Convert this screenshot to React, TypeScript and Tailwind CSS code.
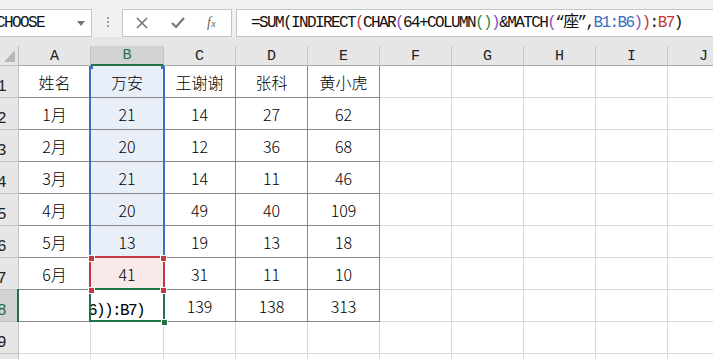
const COLS = [
  { l: "A", w: "w-[72px]" },
  { l: "B", w: "w-[73px]" },
  { l: "C", w: "w-[72px]" },
  { l: "D", w: "w-[72px]" },
  { l: "E", w: "w-[72px]" },
  { l: "F", w: "w-[72px]" },
  { l: "G", w: "w-[72px]" },
  { l: "H", w: "w-[72px]" },
  { l: "I", w: "w-[72px]" },
  { l: "J", w: "w-[72px]" },
];

const DATA = [
  ["姓名", "万安", "王谢谢", "张科", "黄小虎"],
  ["1月", "21", "14", "27", "62"],
  ["2月", "20", "12", "36", "68"],
  ["3月", "21", "14", "11", "46"],
  ["4月", "20", "49", "40", "109"],
  ["5月", "13", "19", "13", "18"],
  ["6月", "41", "31", "11", "10"],
  ["", "", "139", "138", "313"],
];

const mono = "font-['Liberation_Mono','Noto_Sans_CJK_SC',monospace] text-[16px] tracking-[-1.6px]";

function Toolbar() {
  return (
    <div className="h-[37px] bg-[#f1f1f1] flex items-start">
      {/* name box */}
      <div className="mt-[9px] h-[28px] w-[92px] bg-white border border-l-0 border-[#c6c6c6] flex items-center justify-between pr-[6px]">
        <span className={`${mono} ml-[-4px] text-[#111]`}>CHOOSE</span>
        <svg width="8" height="5" viewBox="0 0 8 5">
          <path d="M0 0 L8 0 L4 5 Z" fill="#777" />
        </svg>
      </div>
      <div className="mt-[17px] ml-[15px] flex flex-col gap-[2px]">
        <div className="w-[2px] h-[2px] bg-[#a0a0a0]" />
        <div className="w-[2px] h-[2px] bg-[#a0a0a0]" />
        <div className="w-[2px] h-[2px] bg-[#a0a0a0]" />
      </div>
      {/* cancel / enter / fx */}
      <div className="mt-[9px] ml-[13px] h-[28px] w-[110px] bg-white border border-[#c6c6c6] flex items-center">
        <svg width="12" height="12" viewBox="0 0 12 12" className="ml-[13px]">
          <path d="M1 1 L11 11 M11 1 L1 11" stroke="#777" strokeWidth="1.6" />
        </svg>
        <svg width="14" height="12" viewBox="0 0 14 12" className="ml-[23px]">
          <path d="M1 6 L5 10 L13 1" stroke="#777" strokeWidth="2.2" fill="none" />
        </svg>
        <span className="ml-[22px] font-['Liberation_Serif',serif] italic text-[14px] text-[#666] leading-none">
          f<span className="text-[11px]">x</span>
        </span>
      </div>
      {/* formula */}
      <div className="mt-[9px] ml-[4px] h-[28px] flex-1 bg-white border border-r-0 border-[#c6c6c6] flex items-center pl-[14px] text-[#111]">
        <span className={`${mono} whitespace-nowrap`}>
          =SUM(INDIRECT<span className="text-[#c33b3b]">(</span>CHAR
          <span className="text-[#8b4fc0]">(</span>64+COLUMN
          <span className="text-[#2e8a3c]">()</span>
          <span className="text-[#8b4fc0]">)</span>&amp;MATCH
          <span className="text-[#8b4fc0]">(</span>“座”,
          <span className="text-[#3b6fc8]">B1:B6</span>
          <span className="text-[#8b4fc0]">)</span>
          <span className="text-[#c33b3b]">)</span>:
          <span className="text-[#c33b3b]">B7</span>)
        </span>
      </div>
    </div>
  );
}

function HeaderRow() {
  return (
    <div className="flex h-[20px]">
      <div className="w-[19px] shrink-0 h-[20px] bg-[#e6e6e6] border-r border-b border-[#bdbdbd] relative">
        <svg width="11" height="12" viewBox="0 0 11 12" className="absolute left-[4px] top-[4px]">
          <path d="M11 0 L11 12 L0 12 Z" fill="#b8b8b8" />
        </svg>
      </div>
      {COLS.map((c) => {
        const sel = c.l === "B";
        return (
          <div
            key={c.l}
            className={`${c.w} shrink-0 h-[20px] flex items-end justify-center pb-[1px] border-r border-[#c4c4c4] font-['Liberation_Mono',monospace] text-[15px] leading-none ${
              sel
                ? "bg-[#d2d2d2] border-b-2 border-b-[#217346] text-[#217346]"
                : "bg-[#e6e6e6] border-b border-b-[#ababab] text-[#222]"
            }`}
          >
            {c.l}
          </div>
        );
      })}
    </div>
  );
}

function Row({ r }: { r: number }) {
  const cells = DATA[r - 1];
  const rowSel = r === 8;
  return (
    <div className="flex h-[32px]">
      <div
        className={`w-[19px] shrink-0 h-[32px] border-r border-b border-[#c4c4c4] flex items-end overflow-hidden pb-[2px] ${
          rowSel ? "bg-[#d2d2d2] text-[#217346]" : "bg-[#e6e6e6] text-[#222]"
        }`}
      >
        <span className={`${mono} ml-[-3px] leading-none`}>{r}</span>
      </div>
      {COLS.map((c, i) => {
        const inData = cells && i < 5;
        let bg = "bg-white";
        if (i === 1 && r <= 6) bg = "bg-[#e8eff9]";
        if (i === 1 && r === 7) bg = "bg-[#f9e9e9]";
        const border = inData ? "border-[#878787]" : "border-[#d9d9d9]";
        return (
          <div
            key={c.l}
            className={`${c.w} shrink-0 h-[32px] border-r border-b ${border} ${bg} flex items-center justify-center font-['Noto_Sans_CJK_SC',sans-serif] font-light text-[16px] text-black overflow-hidden`}
          >
            {r === 8 && i === 1 ? (
              <div className="w-full h-full flex items-end justify-end pr-[19px] pb-[2px] overflow-hidden">
                <span className={`${mono} whitespace-nowrap leading-none`}>B6)):B7)</span>
              </div>
            ) : inData ? (
              cells[i]
            ) : null}
          </div>
        );
      })}
    </div>
  );
}

export default function App() {
  const rows = [1, 2, 3, 4, 5, 6, 7, 8, 9, 10];
  return (
    <div className="w-[713px] h-[359px] overflow-hidden bg-white relative">
      <Toolbar />
      <div className="h-[9px] bg-[#e6e6e6]" />
      <div className="flex flex-col">
        <HeaderRow />
        {rows.map((r) => (
          <Row key={r} r={r} />
        ))}
      </div>

      {/* selection ranges */}
      <div className="absolute left-[89px] top-[66px] w-[76px] h-[191px] border-x-2 border-[#3a6fc6]" />
      <div className="absolute left-[89px] top-[66px] w-[4px] h-[3px] bg-[#3a6fc6]" />
      <div className="absolute left-[161px] top-[66px] w-[4px] h-[3px] bg-[#3a6fc6]" />
      <div className="absolute left-[89px] top-[256px] w-[76px] h-[34px] border-2 border-[#c4393f]" />
      <div className="absolute left-[89px] top-[288px] w-[76px] h-[34px] border-2 border-[#217346]" />
      <div className="absolute left-[17px] top-[289px] w-[2px] h-[33px] bg-[#217346]" />
      <div className="absolute left-[88px] top-[255px] w-[5px] h-[5px] bg-[#c4393f] border border-white box-content" />
      <div className="absolute left-[160px] top-[255px] w-[5px] h-[5px] bg-[#c4393f] border border-white box-content" />
      <div className="absolute left-[88px] top-[287px] w-[5px] h-[5px] bg-[#c4393f] border border-white box-content" />
      <div className="absolute left-[160px] top-[287px] w-[5px] h-[5px] bg-[#c4393f] border border-white box-content" />
      <div className="absolute left-[161px] top-[319px] w-[5px] h-[5px] bg-[#217346] border border-white box-content" />
    </div>
  );
}
